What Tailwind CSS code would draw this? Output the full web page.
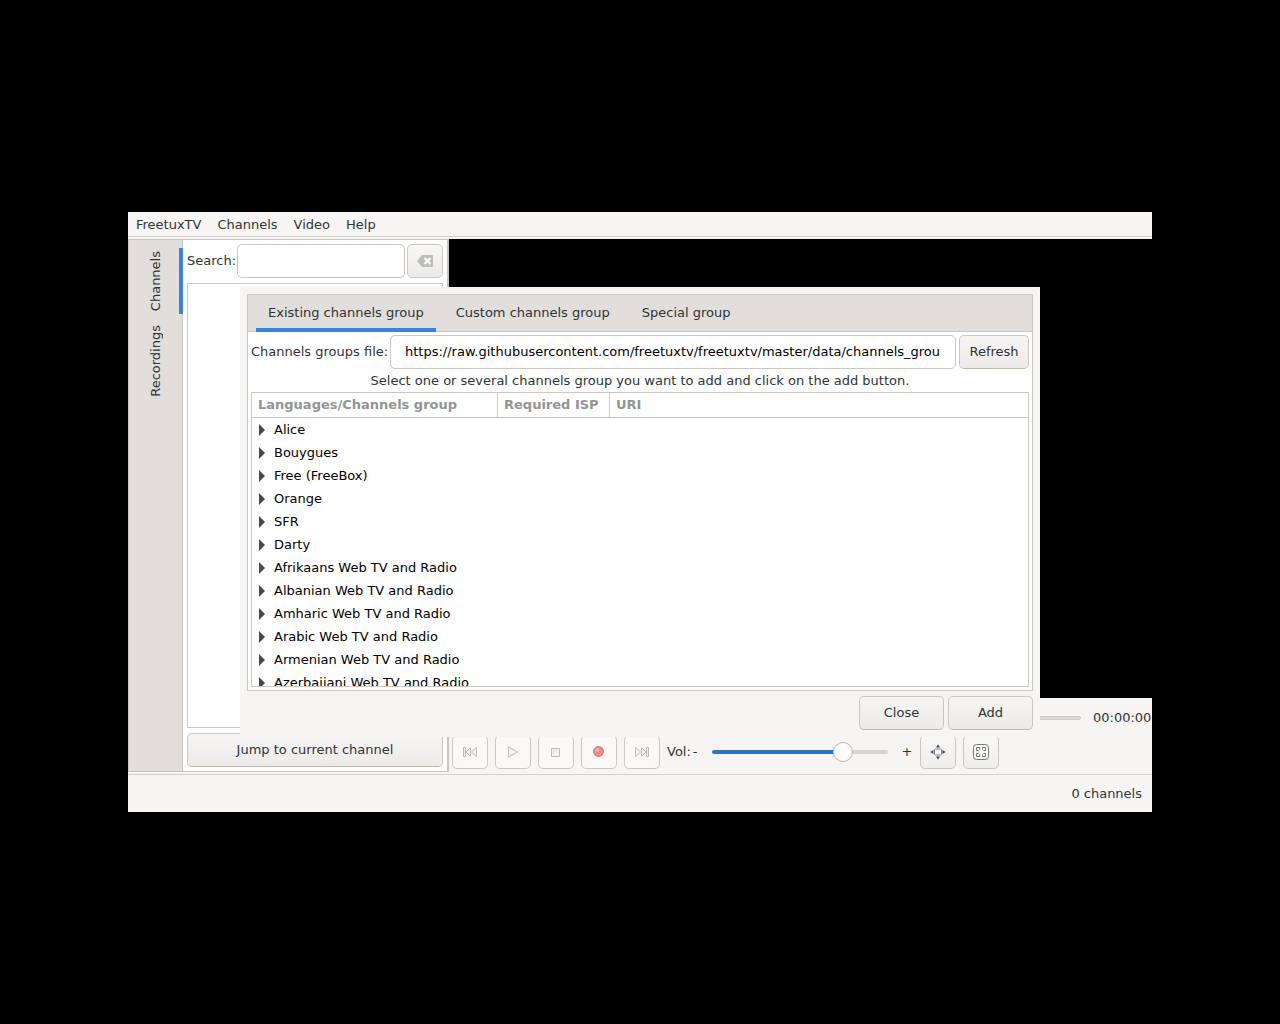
<!DOCTYPE html>
<html lang="en">
<head>
<meta charset="utf-8">
<title>FreetuxTV</title>
<script src="https://cdn.jsdelivr.net/npm/@tailwindcss/browser@4"></script>
</head>
<body class="min-h-screen bg-black flex items-center justify-center font-['DejaVu_Sans',sans-serif] text-[13px] leading-5 text-[#2e3436]">
<div class="relative w-4/5 min-h-[600px] flex flex-col bg-[#f6f5f4]">

  <nav class="h-[25px] mb-[2px] flex items-end gap-4 px-2 pb-px border-b border-[#d5d0cc]">
    <a href="#">FreetuxTV</a>
    <a href="#">Channels</a>
    <a href="#">Video</a>
    <a href="#">Help</a>
  </nav>

  <main class="flex-1 flex">
    <section class="w-[321px] mb-[2px] flex bg-white border border-r-2 border-[#c8c4c1]">
      <div class="w-[54px] flex flex-col gap-2 pt-2 bg-[#e1dedb] border-r border-[#cdc7c2]" role="tablist">
        <button class="h-[66px] -mr-px pl-1 flex justify-center items-center border-r-4 border-[#3584e4]" role="tab" aria-selected="true"><span class="[writing-mode:vertical-rl] rotate-180">Channels</span></button>
        <button class="h-[78px] -mr-px pl-1 flex justify-center items-center border-r-4 border-transparent" role="tab"><span class="[writing-mode:vertical-rl] rotate-180">Recordings</span></button>
      </div>
      <div class="flex-1 min-w-0 flex flex-col p-1">
        <div class="flex items-center">
          <label for="search" class="w-[50px]">Search:</label>
          <input id="search" type="text" class="flex-1 min-w-0 h-[34px] mr-[2px] px-2 rounded-[5px] border border-[#cdc7c2] bg-white">
          <button aria-label="Clear" class="w-9 h-[34px] flex items-center justify-center rounded-[5px] border border-[#cdc7c2] bg-linear-to-b from-[#f8f7f6] to-[#edebe9]">
            <svg width="16" height="12" viewBox="0 0 16 12"><path d="M5 0h10q1 0 1 1v10q0 1-1 1H5L0 6z" fill="#bdbdb9"/><path d="M7.500 3l6 6M13.500 3l-6 6" stroke="#fff" stroke-width="2"/></svg>
          </button>
        </div>
        <div class="flex-1 my-[5px] border border-[#cdc7c2] bg-white"></div>
        <button class="h-[34px] rounded-[5px] border border-[#cdc7c2] border-b-[#bfb8b1] bg-linear-to-b from-[#f6f5f4] to-[#edebe9]">Jump to current channel</button>
      </div>
    </section>

    <section class="flex-1 min-w-0 flex flex-col">
      <div class="flex-1 bg-black"></div>
      <div class="pl-[3px] pb-[5px]">
        <div class="h-[37px] pt-[2px] flex items-center gap-3 pr-[3px]">
          <input type="range" value="0" disabled aria-label="Position" class="flex-1 min-w-0 h-5 appearance-none bg-transparent [&::-webkit-slider-runnable-track]:h-1 [&::-webkit-slider-runnable-track]:rounded-full [&::-webkit-slider-runnable-track]:bg-[#dcdad6] [&::-webkit-slider-runnable-track]:border [&::-webkit-slider-runnable-track]:border-[#cfccc8]">
          <span class="w-14">00:00:00</span>
        </div>
        <div class="flex items-center">
          <div class="flex gap-[7px]">
            <button disabled aria-label="Previous" class="w-9 h-[34px] flex items-center justify-center rounded-[5px] border border-[#cdc7c2] bg-[#faf9f8]">
              <svg width="16" height="16" viewBox="0 0 16 16" fill="#f4f3f2" stroke="#bcbcba"><path d="M1.500 3.500h2v9h-2zM8.500 3.500v9L4 8zM14.500 3.500v9L9.500 8z"/></svg>
            </button>
            <button disabled aria-label="Play" class="w-9 h-[34px] flex items-center justify-center rounded-[5px] border border-[#cdc7c2] bg-[#faf9f8]">
              <svg width="16" height="16" viewBox="0 0 16 16" fill="#f4f3f2" stroke="#bcbcba"><path d="M3.500 3v10l9-5z"/></svg>
            </button>
            <button disabled aria-label="Stop" class="w-9 h-[34px] flex items-center justify-center rounded-[5px] border border-[#cdc7c2] bg-[#faf9f8]">
              <svg width="16" height="16" viewBox="0 0 16 16" fill="#f4f3f2" stroke="#bcbcba"><path d="M3.500 4.500h8v8h-8z"/><path d="M5.500 10.500v-4h4" stroke="#e2e1df"/></svg>
            </button>
            <button disabled aria-label="Record" class="w-9 h-[34px] flex items-center justify-center rounded-[5px] border border-[#cdc7c2] bg-[#faf9f8]">
              <svg width="16" height="16" viewBox="0 0 16 16"><circle cx="7.500" cy="7.500" r="5" fill="#f08a8a" stroke="#dd7777"/><circle cx="6.500" cy="6" r="2" fill="#f7b0b0"/></svg>
            </button>
            <button disabled aria-label="Next" class="w-9 h-[34px] flex items-center justify-center rounded-[5px] border border-[#cdc7c2] bg-[#faf9f8]">
              <svg width="16" height="16" viewBox="0 0 16 16" fill="#f4f3f2" stroke="#bcbcba"><path d="M12.500 3.500h2v9h-2zM7.500 3.500v9L12 8zM1.500 3.500v9L6.500 8z"/></svg>
            </button>
          </div>
          <label for="volume" class="ml-[7px]">Vol:</label>
          <span class="ml-[2px]">-</span>
          <input id="volume" type="range" value="78" class="ml-[14px] w-[176px] h-5 appearance-none bg-transparent [&::-webkit-slider-runnable-track]:h-1 [&::-webkit-slider-runnable-track]:rounded-full [&::-webkit-slider-runnable-track]:bg-linear-to-r [&::-webkit-slider-runnable-track]:from-[#2a72d0] [&::-webkit-slider-runnable-track]:from-75% [&::-webkit-slider-runnable-track]:to-[#d8d5d1] [&::-webkit-slider-runnable-track]:to-75% [&::-webkit-slider-thumb]:appearance-none [&::-webkit-slider-thumb]:w-5 [&::-webkit-slider-thumb]:h-5 [&::-webkit-slider-thumb]:-mt-2 [&::-webkit-slider-thumb]:rounded-full [&::-webkit-slider-thumb]:border [&::-webkit-slider-thumb]:border-[#bfb8b1] [&::-webkit-slider-thumb]:bg-[#fcfcfb]">
          <span class="ml-[14px] mr-2">+</span>
          <div class="flex gap-[7px]">
            <button aria-label="Fullscreen" class="w-9 h-[34px] flex items-center justify-center rounded-[5px] border border-[#cdc7c2] bg-linear-to-b from-[#f8f7f6] to-[#f0eeec]">
              <svg width="16" height="16" viewBox="0 0 16 16"><rect x="4.500" y="5" width="7" height="6" rx="1" fill="#fff" stroke="#85878d"/><path d="M8 .5l2 3H6zM8 15.500l2-3H6zM.5 8l3-2v4zM15.500 8l-3-2v4z" fill="#34386a"/></svg>
            </button>
            <button aria-label="Channel grid" class="w-9 h-[34px] flex items-center justify-center rounded-[5px] border border-[#cdc7c2] bg-linear-to-b from-[#f8f7f6] to-[#f0eeec]">
              <svg width="16" height="16" viewBox="0 0 16 16" fill="#fff" stroke="#777975"><rect x=".5" y=".5" width="15" height="15" rx="3" fill="#f7f7f6"/><path d="M3.500 3.500h3v2l-1 1h-2zM9.500 3.500h3v3h-2l-1-1zM3.500 9.500h2l1 1v2h-3zM10.500 9.500h2v3h-3v-2z"/></svg>
            </button>
          </div>
        </div>
      </div>
    </section>
  </main>

  <footer class="h-[38px] flex items-center justify-end px-[10px] border-t border-[#d5d0cc]">0 channels</footer>

  <div role="dialog" aria-label="Add channels group" class="absolute inset-x-28 inset-y-[75px] flex flex-col gap-[5px] p-[7px] bg-[#f6f5f4]">
    <div class="flex-1 min-h-0 flex flex-col border border-[#cdc7c2] bg-white">
      <div role="tablist" class="h-[37px] flex px-2 gap-2 bg-[#e1dedb] border-b border-[#cdc7c2]">
        <button role="tab" aria-selected="true" class="-mb-px px-3 pt-[2px] border-b-4 border-[#3584e4]">Existing channels group</button>
        <button role="tab" class="-mb-px px-3 pt-[2px] border-b-4 border-transparent">Custom channels group</button>
        <button role="tab" class="-mb-px px-3 pt-[2px] border-b-4 border-transparent">Special group</button>
      </div>
      <div class="flex-1 min-h-0 flex flex-col p-[3px]">
        <div class="flex items-center gap-[3px]">
          <label for="file" class="w-[136px] whitespace-nowrap">Channels groups file:</label>
          <input id="file" type="text" value="https://raw.githubusercontent.com/freetuxtv/freetuxtv/master/data/channels_groups.xml" class="flex-1 min-w-0 h-[34px] px-[14px] pb-[2px] rounded-[5px] border border-[#cdc7c2] bg-white text-black">
          <button class="w-[70px] h-[34px] rounded-[5px] border border-[#cdc7c2] border-b-[#bfb8b1] bg-linear-to-b from-[#f6f5f4] to-[#edebe9]">Refresh</button>
        </div>
        <p class="my-px pt-px text-center">Select one or several channels group you want to add and click on the add button.</p>
        <div class="flex-1 min-h-0 overflow-hidden border border-[#cdc7c2]">
          <table class="w-full table-fixed border-separate border-spacing-0 text-black text-left">
            <colgroup><col class="w-[246px]"><col class="w-28"><col></colgroup>
            <thead class="text-[#929595]">
              <tr class="h-[25px]">
                <th class="px-[6px] border-r border-b border-[#cdc7c2]">Languages/Channels group</th>
                <th class="px-[6px] border-r border-b border-[#cdc7c2] whitespace-nowrap">Required ISP</th>
                <th class="px-[6px] border-b border-[#cdc7c2]">URI</th>
              </tr>
            </thead>
            <tbody id="groups"></tbody>
          </table>
        </div>
      </div>
    </div>
    <div class="h-[34px] flex justify-end gap-1">
      <button class="w-[85px] h-[34px] rounded-[5px] border border-[#cdc7c2] border-b-[#bfb8b1] bg-linear-to-b from-[#f6f5f4] to-[#edebe9]">Close</button>
      <button class="w-[85px] h-[34px] rounded-[5px] border border-[#cdc7c2] border-b-[#bfb8b1] bg-linear-to-b from-[#f6f5f4] to-[#edebe9]">Add</button>
    </div>
  </div>
</div>
<script>
  const web = ["Afrikaans", "Albanian", "Amharic", "Arabic", "Armenian", "Azerbaijani"].map(l => l + " Web TV and Radio");
  const names = ["Alice", "Bouygues", "Free (FreeBox)", "Orange", "SFR", "Darty", ...web];
  document.getElementById("groups").innerHTML = names.map(n =>
    `<tr class="h-[23px]"><td class="pl-[7px]"><div class="flex items-center"><button aria-label="Expand ${n}" class="w-[15px]"><svg width="7" height="12" viewBox="0 0 7 12"><path d="M0 0l6 6L0 12z" fill="#464a4b"/></svg></button><span class="whitespace-nowrap">${n}</span></div></td><td></td><td></td></tr>`).join("");
</script>
</body>
</html>
